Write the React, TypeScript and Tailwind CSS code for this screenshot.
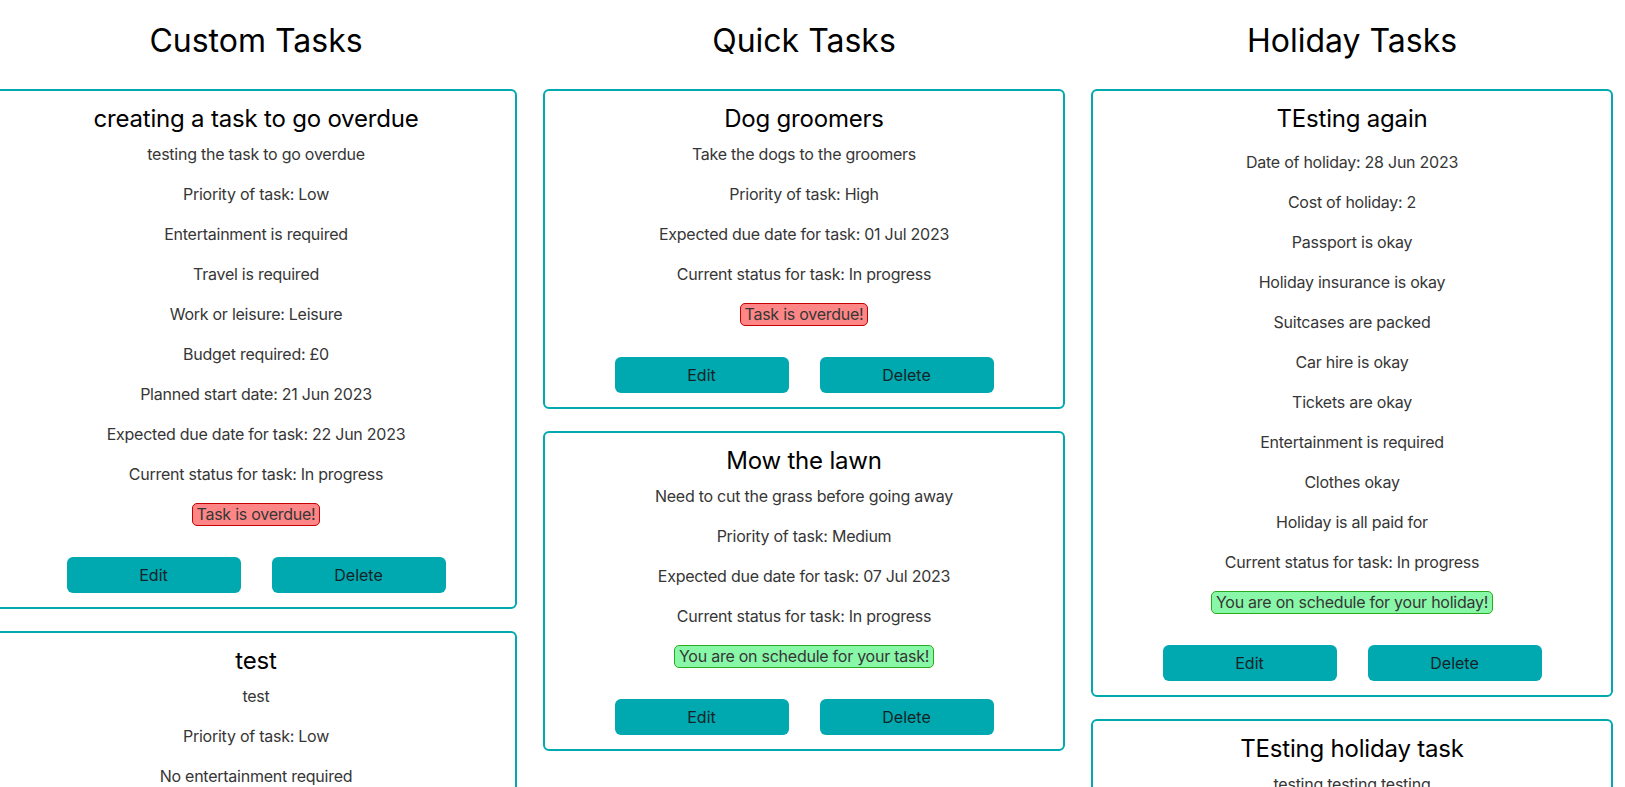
type Badge = { kind: 'overdue' | 'ok'; text: string };

interface Task {
  id: number;
  title: string;
  lines: string[];
  badge?: Badge;
  noDescription?: boolean;
}

interface Column {
  heading: string;
  tasks: Task[];
}

const columns: Column[] = [
  {
    heading: 'Custom Tasks',
    tasks: [
      {
        id: 1,
        title: 'creating a task to go overdue',
        lines: [
          'testing the task to go overdue',
          'Priority of task: Low',
          'Entertainment is required',
          'Travel is required',
          'Work or leisure: Leisure',
          'Budget required: £0',
          'Planned start date: 21 Jun 2023',
          'Expected due date for task: 22 Jun 2023',
          'Current status for task: In progress',
        ],
        badge: { kind: 'overdue', text: 'Task is overdue!' },
      },
      {
        id: 2,
        title: 'test',
        lines: [
          'test',
          'Priority of task: Low',
          'No entertainment required',
          'No travel required',
          'Work or leisure: Work',
          'Budget required: £0',
          'Planned start date: 20 Jun 2023',
          'Expected due date for task: 30 Jun 2023',
          'Current status for task: In progress',
        ],
        badge: { kind: 'ok', text: 'You are on schedule for your task!' },
      },
    ],
  },
  {
    heading: 'Quick Tasks',
    tasks: [
      {
        id: 3,
        title: 'Dog groomers',
        lines: [
          'Take the dogs to the groomers',
          'Priority of task: High',
          'Expected due date for task: 01 Jul 2023',
          'Current status for task: In progress',
        ],
        badge: { kind: 'overdue', text: 'Task is overdue!' },
      },
      {
        id: 4,
        title: 'Mow the lawn',
        lines: [
          'Need to cut the grass before going away',
          'Priority of task: Medium',
          'Expected due date for task: 07 Jul 2023',
          'Current status for task: In progress',
        ],
        badge: { kind: 'ok', text: 'You are on schedule for your task!' },
      },
    ],
  },
  {
    heading: 'Holiday Tasks',
    tasks: [
      {
        id: 5,
        title: 'TEsting again',
        noDescription: true,
        lines: [
          'Date of holiday: 28 Jun 2023',
          'Cost of holiday: 2',
          'Passport is okay',
          'Holiday insurance is okay',
          'Suitcases are packed',
          'Car hire is okay',
          'Tickets are okay',
          'Entertainment is required',
          'Clothes okay',
          'Holiday is all paid for',
          'Current status for task: In progress',
        ],
        badge: { kind: 'ok', text: 'You are on schedule for your holiday!' },
      },
      {
        id: 6,
        title: 'TEsting holiday task',
        lines: [
          'testing testing testing',
          'Date of holiday: 14 Jul 2023',
          'Cost of holiday: 500',
          'Passport is okay',
          'Holiday insurance is okay',
        ],
      },
    ],
  },
];

function StatusBadge({ badge }: { badge: Badge }) {
  return (
    <span
      className={
        badge.kind === 'overdue'
          ? 'inline-block rounded-[5px] border border-[#c40000] bg-[#ff8686] px-[4px] leading-[21px]'
          : 'inline-block rounded-[5px] border border-[#2aaa1e] bg-[#88f8a8] px-[4px] leading-[21px]'
      }
    >
      {badge.text}
    </span>
  );
}

function TaskCard({ task }: { task: Task }) {
  return (
    <div className="rounded-[6px] border-2 border-[#00a8b0] px-4 pt-[14px] pb-[14px] text-center">
      <h4 className="mb-2 text-[24px] leading-[1.2] tracking-[-0.2px] text-black">{task.title}</h4>
      {task.lines.map((line, i) => (
        <p
          key={i}
          className={`mb-4 text-[16px] leading-6 tracking-[-0.25px] text-[#363636] ${task.noDescription && i === 0 ? 'mt-[16.5px]' : ''}`}
        >
          {line}
        </p>
      ))}
      {task.badge && (
        <p className="mb-4 text-[16px] leading-6 tracking-[-0.25px] text-[#363636]">
          <StatusBadge badge={task.badge} />
        </p>
      )}
      <div className="mt-[31px] flex justify-center gap-[31px]">
        <button className="h-[36px] w-[174px] rounded-[6px] bg-[#00a8b0] text-[16px] text-[#142426]">
          Edit
        </button>
        <button className="h-[36px] w-[174px] rounded-[6px] bg-[#00a8b0] text-[16px] text-[#142426]">
          Delete
        </button>
      </div>
    </div>
  );
}

export default function App() {
  return (
    <div className="h-[787px] overflow-hidden bg-white font-['Inter',sans-serif]">
      <div className="ml-[-18px] flex w-[1644px] items-start">
        {columns.map((col) => (
          <div key={col.heading} className="w-[548px] px-[13px]">
            <h2 className="mt-[22px] mb-[28.6px] text-center text-[32px] leading-[1.2] text-black">
              {col.heading}
            </h2>
            <div className="flex flex-col gap-[22px]">
              {col.tasks.map((t) => (
                <TaskCard key={t.id} task={t} />
              ))}
            </div>
          </div>
        ))}
      </div>
    </div>
  );
}
